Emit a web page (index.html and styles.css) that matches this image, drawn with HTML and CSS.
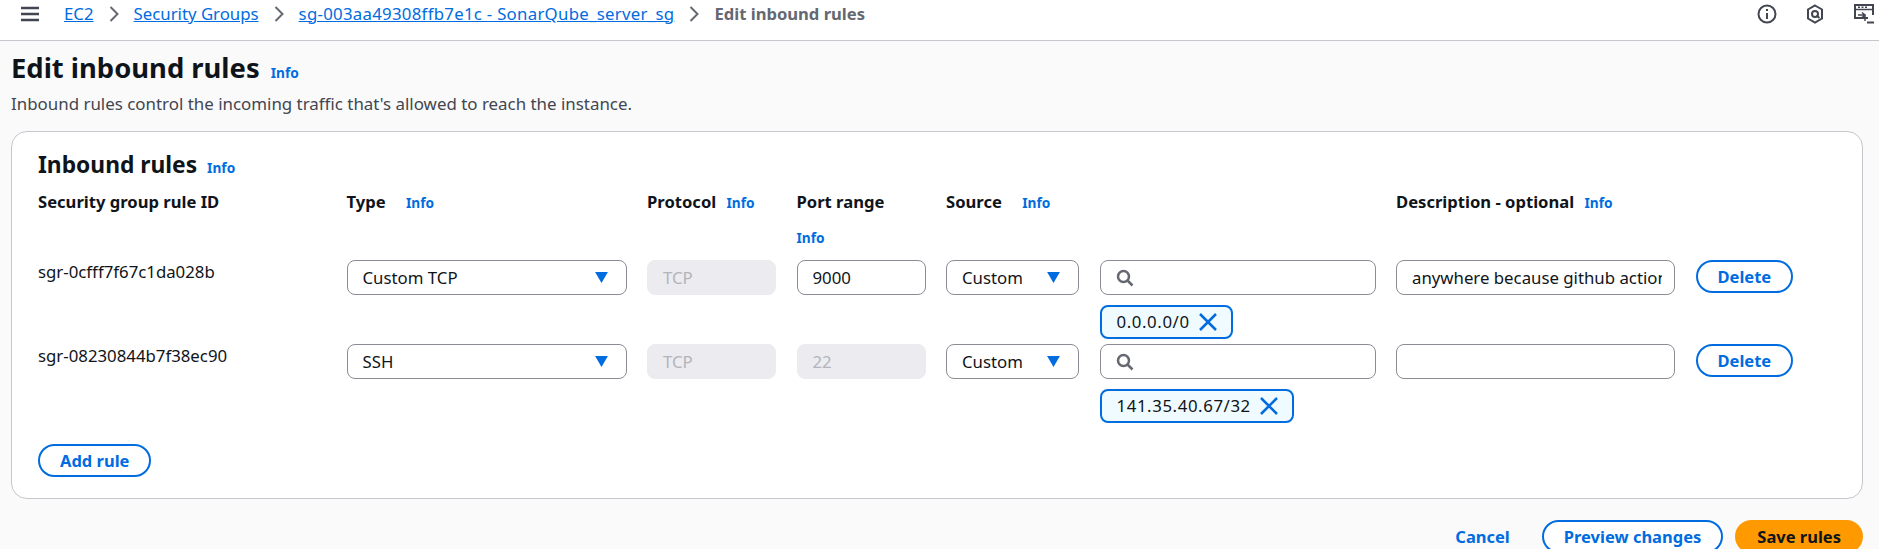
FILE: index.html
```html
<!DOCTYPE html>
<html lang="en">
<head>
  <meta charset="UTF-8" />
  <title>Edit inbound rules</title>
  <link rel="stylesheet" href="styles.css">
</head>
<body>
  <header class="topbar">
    <svg class="menu-icon" viewBox="0 0 20 16" width="20" height="16"><path d="M1 2h18M1 8h18M1 14h18" /></svg>
    <nav class="crumbs">
      <a href="#">EC2</a>
      <svg class="chevron" viewBox="0 0 10 16" width="10" height="16"><path d="M1.5 1 8.500 8l-7 7" /></svg>
      <a href="#">Security Groups</a>
      <svg class="chevron" viewBox="0 0 10 16" width="10" height="16"><path d="M1.5 1 8.500 8l-7 7" /></svg>
      <a class="sg-link" href="#">sg-003aa49308ffb7e1c - SonarQube_server_sg</a>
      <svg class="chevron" viewBox="0 0 10 16" width="10" height="16"><path d="M1.5 1 8.500 8l-7 7" /></svg>
      <span class="current">Edit inbound rules</span>
    </nav>
    <div class="tools">
      <svg viewBox="0 0 20 20" width="20" height="20"><circle cx="10" cy="10" r="8.500" /><path d="M10 9v6M10 5v2" /></svg>
      <svg viewBox="0 0 20 20" width="20" height="20"><path d="M10 1.500 17 5.500v9l-7 4-7-4v-9z" /><circle cx="10" cy="10" r="3" /><path d="m11.500 11.500 3 2.500" /></svg>
      <svg viewBox="0 0 22 22" width="22" height="22"><path d="M15 15H2V2h18v10" /><path d="M2 6.500h18" class="thin" /><path d="M5 4.300h2M8.500 4.300h2M12 4.300h2" class="thin" /><path d="M5 12h7v6M9 9.500 12 12l-3 2.500" class="thin" /><path d="M14 19.500h7" /></svg>
    </div>
  </header>

  <main class="page">
    <h1>Edit inbound rules <a class="info title-info" href="#">Info</a></h1>
    <p class="lead">Inbound rules control the incoming traffic that's allowed to reach the instance.</p>

    <section class="card">
      <h2>Inbound rules <a class="info title-info" href="#">Info</a></h2>

      <div class="rules">
        <div class="head">Security group rule ID</div>
        <div class="head">Type <a class="info wide" href="#">Info</a></div>
        <div class="head">Protocol <a class="info" href="#">Info</a></div>
        <div class="head">Port range<a class="info under" href="#">Info</a></div>
        <div class="head">Source <a class="info wide" href="#">Info</a></div>
        <div class="head"></div>
        <div class="head">Description - optional <a class="info" href="#">Info</a></div>
        <div class="head"></div>

        <div class="rule-id">sgr-0cfff7f67c1da028b</div>
        <div class="field select">Custom TCP <svg class="caret" viewBox="0 0 14 12" width="13" height="11"><path d="M0 0h14L7 12z" /></svg></div>
        <div class="field disabled">TCP</div>
        <input class="field" type="text" value="9000">
        <div class="field select">Custom <svg class="caret" viewBox="0 0 14 12" width="13" height="11"><path d="M0 0h14L7 12z" /></svg></div>
        <div class="source-cell">
          <div class="field search"><svg class="search-icon" viewBox="0 0 18 18" width="18" height="18"><circle cx="7.500" cy="7.500" r="5.500" /><path d="m11.500 11.500 5 5" /></svg></div>
          <div class="tag">0.0.0.0/0 <svg class="tag-x" viewBox="0 0 18 18" width="18" height="18"><path d="m1 1 16 16M17 1 1 17" /></svg></div>
        </div>
        <input class="field" type="text" value="anywhere because github actions">
        <button class="btn">Delete</button>

        <div class="rule-id">sgr-08230844b7f38ec90</div>
        <div class="field select">SSH <svg class="caret" viewBox="0 0 14 12" width="13" height="11"><path d="M0 0h14L7 12z" /></svg></div>
        <div class="field disabled">TCP</div>
        <div class="field disabled">22</div>
        <div class="field select">Custom <svg class="caret" viewBox="0 0 14 12" width="13" height="11"><path d="M0 0h14L7 12z" /></svg></div>
        <div class="source-cell">
          <div class="field search"><svg class="search-icon" viewBox="0 0 18 18" width="18" height="18"><circle cx="7.500" cy="7.500" r="5.500" /><path d="m11.500 11.500 5 5" /></svg></div>
          <div class="tag">141.35.40.67/32 <svg class="tag-x" viewBox="0 0 18 18" width="18" height="18"><path d="m1 1 16 16M17 1 1 17" /></svg></div>
        </div>
        <input class="field" type="text" value="">
        <button class="btn">Delete</button>
      </div>

      <button class="btn add">Add rule</button>
    </section>

    <div class="actions">
      <a class="cancel" href="#">Cancel</a>
      <button class="btn preview">Preview changes</button>
      <button class="btn primary">Save rules</button>
    </div>
  </main>
</body>
</html>
```

FILE: styles.css
```css
* {
  box-sizing: border-box;
}

html, body {
  height: 549px;
  overflow: hidden;
}

body {
  margin: 0;
  background-color: #fafafa;
  color: #0f141a;
  font-family: "Noto Sans", sans-serif;
  font-size: 16.800px;
  line-height: 24px;
}

a {
  color: #006ce0;
}

svg {
  fill: none;
  stroke: currentColor;
  flex: none;
}

/* top bar */
.topbar {
  display: flex;
  align-items: center;
  height: 41px;
  padding: 0 4px 13px 20px;
  background-color: #fff;
  border-bottom: 1px solid #c6c6cd;
}

.menu-icon {
  color: #424650;
  stroke-width: 2.500;
  margin-right: 24px;
}

.crumbs {
  display: flex;
  align-items: center;
  gap: 15px;
  flex: 1;
}

.sg-link {
  letter-spacing: 0.280px;
}

.chevron {
  color: #656871;
  stroke-width: 2;
}

.current {
  color: #656871;
  font-weight: 700;
  font-size: 16.600px;
}

.tools {
  display: flex;
  align-items: center;
  gap: 28px;
  color: #424650;
}

.tools svg {
  stroke-width: 2;
}

.tools .thin {
  stroke-width: 1.500;
}

/* page */
.page {
  padding: 0 16px 0 11px;
}

h1 {
  margin: 11px 0 0;
  font-size: 27.400px;
  line-height: 32px;
  font-weight: 700;
}

.lead {
  margin: 5px 0 0;
  color: #424650;
  line-height: 20px;
  font-size: 16.900px;
}

.info {
  font-size: 13.700px;
  font-weight: 700;
  text-decoration: none;
  margin-left: 6px;
}

.info.title-info {
  margin-left: 4px;
}

.info.wide {
  margin-left: 16px;
}

.info.under {
  display: block;
  margin: 15px 0 0;
  line-height: 18px;
}

.card {
  margin-top: 17px;
  height: 368px;
  padding: 19px 26px 0;
  background-color: #fff;
  border: 1px solid #c6c6cd;
  border-radius: 16px;
}

h2 {
  margin: 0;
  font-size: 22.800px;
  line-height: 28px;
  font-weight: 700;
}

/* rules table */
.rules {
  display: grid;
  grid-template-columns: 288px 280px 129px 129px 133px 276px 279px 97px;
  column-gap: 20.500px;
  margin-top: 8px;
}

.head {
  height: 70px;
  font-size: 16.600px;
  font-weight: 700;
  white-space: nowrap;
}

.rule-id {
  line-height: 20px;
  padding-top: 2px;
}

.field {
  display: block;
  width: 100%;
  height: 35px;
  padding: 0 12px 0 15px;
  background-color: #fff;
  border: 1px solid #8c8c94;
  border-radius: 8px;
  color: #0f141a;
  font: 16.800px/33px "Noto Sans", sans-serif;
  outline: none;
}

.select {
  display: flex;
  align-items: center;
  justify-content: space-between;
  padding-right: 18px;
}

.caret {
  fill: #006ce0;
  stroke: none;
}

.disabled {
  background-color: #ebebf0;
  border-color: #ebebf0;
  color: #b4b4bb;
}

.source-cell {
  height: 84px;
}

.rules > .source-cell:nth-last-child(3) {
  height: 100px;
}

.search {
  display: flex;
  align-items: center;
  color: #656871;
}

.search-icon {
  stroke-width: 2.500;
}

.tag {
  display: inline-flex;
  align-items: center;
  gap: 9px;
  height: 34px;
  margin-top: 10px;
  padding: 0 14px 0 15px;
  background-color: #f0fbff;
  border: 2px solid #006ce0;
  border-radius: 8px;
  letter-spacing: 0.600px;
}

.tag-x {
  color: #006ce0;
  stroke-width: 2.500;
}

/* buttons */
.btn {
  height: 33px;
  padding: 0 20px;
  background-color: #fff;
  border: 2px solid #006ce0;
  border-radius: 20px;
  color: #006ce0;
  font: 700 16.500px/20px "Noto Sans", sans-serif;
  cursor: pointer;
}

.add {
  display: block;
}

.actions {
  display: flex;
  align-items: center;
  justify-content: flex-end;
  margin-top: 21px;
}

.cancel {
  font-weight: 700;
  font-size: 16.500px;
  text-decoration: none;
  margin-right: 32px;
}

.preview {
  margin-right: 12px;
}

.primary {
  background-color: #ff9900;
  border-color: #ff9900;
  color: #0f141a;
}
```
